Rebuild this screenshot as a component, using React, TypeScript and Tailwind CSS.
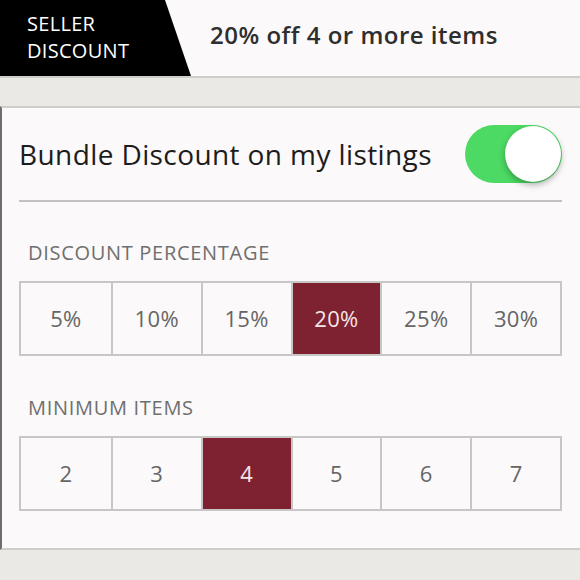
import { useState } from 'react';

const percentages = [5, 10, 15, 20, 25, 30];
const minItems = [2, 3, 4, 5, 6, 7];

function OptionRow({
  options,
  value,
  suffix,
  onSelect,
}: {
  options: number[];
  value: number;
  suffix?: string;
  onSelect: (v: number) => void;
}) {
  return (
    <div className="grid grid-cols-6 border-2 border-[#c9c7c6] bg-[#fbf9f9]">
      {options.map((opt, i) => {
        const active = opt === value;
        return (
          <button
            key={opt}
            onClick={() => onSelect(opt)}
            className={`h-[71px] flex items-center justify-center text-[22px] tracking-[0.3px] ${
              i > 0 ? 'border-l-2 border-[#c9c7c6]' : ''
            } ${active ? 'bg-[#7e2130] text-[#f3e6e8]' : 'text-[#666666]'}`}
          >
            {opt}
            {suffix}
          </button>
        );
      })}
    </div>
  );
}

export default function App() {
  const [enabled, setEnabled] = useState(true);
  const [pct, setPct] = useState(20);
  const [items, setItems] = useState(4);

  return (
    <div
      className="w-[580px] h-[580px] overflow-hidden bg-[#ebe9e6] flex flex-col"
      style={{ fontFamily: '"Open Sans", Lato, sans-serif' }}
    >
      {/* header strip */}
      <div className="relative h-[78px] bg-[#fbf9f9] border-b-2 border-[#cfcdca] flex items-center shrink-0">
        <div
          className="absolute inset-y-0 left-0 w-[191px] bg-black"
          style={{ clipPath: 'polygon(0 0, 165px 0, 191px 100%, 0 100%)' }}
        />
        <div className="relative -mt-[3px] pl-[27px] w-[210px] text-white text-[20px] leading-[27px] tracking-[0.3px]">
          SELLER
          <br />
          DISCOUNT
        </div>
        <div className="relative -mt-[6px] text-[#2e2e2e] text-[24px] font-semibold tracking-[0.5px]">
          20% off {items} or more items
        </div>
      </div>

      <div className="h-[28px] shrink-0" />

      {/* settings panel */}
      <div className="bg-[#fbf9f9] border-t-2 border-b-2 border-[#cfcdca] border-l-2 border-l-[#6d6d6d] pl-[17px] pr-[18px] pb-[37px] shrink-0">
        <div className="flex items-center justify-between h-[94px] border-b-2 border-[#c4c2c1]">
          <span className="text-[28px] text-[#1c1c1c] tracking-[0.4px]">Bundle Discount on my listings</span>
          <button
            onClick={() => setEnabled(!enabled)}
            className={`relative w-[97px] h-[58px] rounded-full transition-colors ${
              enabled ? 'bg-[#4cd964]' : 'bg-[#e5e5e5]'
            }`}
          >
            <span
              className={`absolute top-[1px] w-[56px] h-[56px] rounded-full bg-white shadow-[0_3px_6px_rgba(0,0,0,0.3)] transition-all ${
                enabled ? 'right-[1px]' : 'left-[1px]'
              }`}
            />
          </button>
        </div>

        <div className="pl-[9px] pt-[41px] pb-[18px] text-[20px] text-[#6f6f6f] leading-none tracking-[0.7px]">
          DISCOUNT PERCENTAGE
        </div>
        <OptionRow options={percentages} value={pct} suffix="%" onSelect={setPct} />

        <div className="pl-[9px] pt-[42px] pb-[18px] text-[20px] text-[#6f6f6f] leading-none tracking-[0.7px]">
          MINIMUM ITEMS
        </div>
        <OptionRow options={minItems} value={items} onSelect={setItems} />
      </div>
    </div>
  );
}
